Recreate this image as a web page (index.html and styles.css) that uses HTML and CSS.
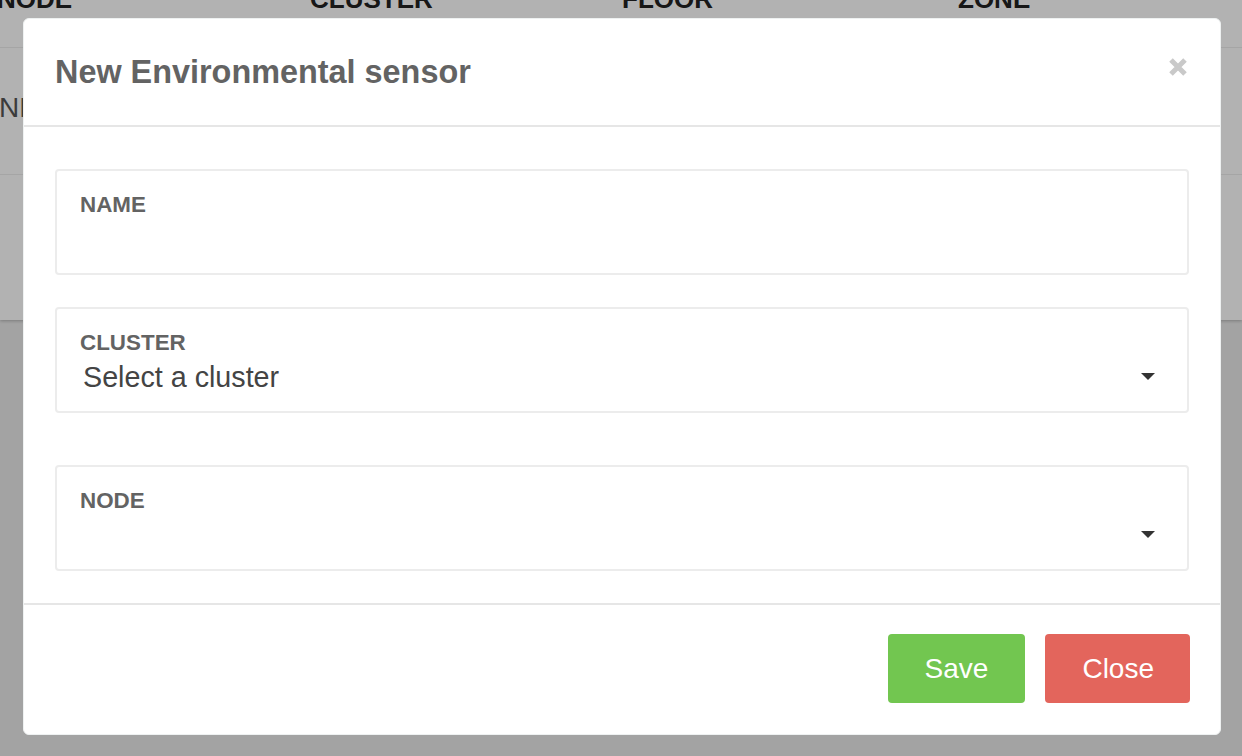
FILE: index.html
```html
<!DOCTYPE html>
<html lang="en">
<head>
<meta charset="utf-8">
<title>New Environmental sensor</title>
<link rel="stylesheet" href="styles.css">
</head>
<body>
<div class="page">
  <div class="card">
    <div class="thead">
      <div class="th">NODE</div>
      <div class="th">CLUSTER</div>
      <div class="th">FLOOR</div>
      <div class="th">ZONE</div>
    </div>
    <div class="trow">
      <div class="td">NDE-01</div>
    </div>
    <div class="trow trow-empty"></div>
  </div>
</div>
<div class="overlay"></div>
<div class="modal">
  <div class="modal-header">
    <h2 class="modal-title">New Environmental sensor</h2>
    <button class="modal-close" aria-label="Close">
      <svg width="20" height="20" viewBox="0 0 20 20"><path d="M3 3 L17 17 M17 3 L3 17" stroke="#c9c9c9" stroke-width="5" stroke-linecap="butt" fill="none"/></svg>
    </button>
  </div>
  <div class="modal-body">
    <div class="field">
      <label class="field-label">NAME</label>
      <div class="field-control"><input class="field-input" type="text"></div>
    </div>
    <div class="field field-wide-gap">
      <label class="field-label">CLUSTER</label>
      <div class="field-control select"><span class="select-value">Select a cluster</span><span class="caret"></span></div>
    </div>
    <div class="field">
      <label class="field-label">NODE</label>
      <div class="field-control select"><span class="select-value"></span><span class="caret"></span></div>
    </div>
  </div>
  <div class="modal-footer">
    <button class="btn btn-save">Save</button>
    <button class="btn btn-close">Close</button>
  </div>
</div>
</body>
</html>
```

FILE: styles.css
```css
html, body {
  margin: 0;
  padding: 0;
}
body {
  background: #eaeaea;
  font-family: "Liberation Sans", Arial, sans-serif;
  width: 1242px;
  height: 756px;
  overflow: hidden;
}
.card {
  background: #ffffff;
  box-shadow: 0 1px 3px rgba(0, 0, 0, 0.25);
  height: 320px;
  overflow: hidden;
}
.thead {
  display: grid;
  grid-template-columns: 313px 312px 336px 1fr;
  margin-left: -3px;
  margin-top: -14px;
  height: 62px;
  border-bottom: 1px solid #ececec;
  box-sizing: border-box;
}
.th {
  font-size: 26px;
  font-weight: bold;
  line-height: 26px;
  color: #222;
}
.trow {
  height: 127px;
  border-bottom: 1px solid #ececec;
  box-sizing: border-box;
  display: flex;
  align-items: center;
}
.trow-empty {
  border-bottom: none;
}
.td {
  font-size: 28px;
  color: #555;
  margin-left: -1px;
  margin-top: -6px;
}
.overlay {
  position: fixed;
  inset: 0;
  background: rgba(0, 0, 0, 0.3);
}
.modal {
  position: fixed;
  left: 23px;
  top: 18px;
  width: 1198px;
  box-sizing: border-box;
  background: #fff;
  border: 1px solid #eef1f1;
  border-radius: 6px;
}
.modal-header {
  height: 108px;
  box-sizing: border-box;
  border-bottom: 2px solid #e6e6e6;
  display: flex;
  align-items: center;
  justify-content: space-between;
  padding: 0 32px 0 31px;
}
.modal-title {
  margin: 0;
  font-size: 32.4px;
  font-weight: bold;
  color: #636363;
  line-height: 36px;
}
.modal-close {
  align-self: flex-start;
  margin-top: 38px;
  padding: 0;
  border: 0;
  background: none;
  width: 20px;
  height: 20px;
  display: block;
}
.modal-close svg {
  display: block;
}
.modal-body {
  padding: 42px 31px 32px 31px;
}
.field {
  border: 2px solid #ececec;
  border-radius: 4px;
  height: 106px;
  box-sizing: border-box;
  padding: 21px 32px 0 23px;
  margin-bottom: 32px;
}
.field:last-child {
  margin-bottom: 0;
}
.field-wide-gap {
  margin-bottom: 52px;
}
.field-label {
  display: block;
  font-size: 22.4px;
  font-weight: bold;
  line-height: 26px;
  color: #636363;
}
.field-control {
  margin-top: 4px;
  height: 34px;
  display: flex;
  align-items: center;
}
.field-input {
  border: 0;
  outline: none;
  background: transparent;
  width: 100%;
  height: 34px;
  padding: 0;
  font-family: inherit;
  font-size: 28px;
}
.select {
  justify-content: space-between;
}
.select-value {
  font-size: 28.7px;
  line-height: 34px;
  color: #444;
  margin-left: 3px;
}
.caret {
  width: 0;
  height: 0;
  border-left: 7.5px solid transparent;
  border-right: 7.5px solid transparent;
  border-top: 7px solid #333;
  margin-top: -1px;
}
.modal-footer {
  border-top: 2px solid #e6e6e6;
  padding: 29px 30px 31px;
  display: flex;
  justify-content: flex-end;
  gap: 20px;
}
.btn {
  height: 69px;
  padding: 0 37px;
  border: 0;
  border-radius: 4px;
  font-family: inherit;
  font-size: 28px;
  color: #fff;
}
.btn-save {
  background: #72c650;
}
.btn-close {
  background: #e3655c;
  padding: 0 36px 0 37px;
}
```
